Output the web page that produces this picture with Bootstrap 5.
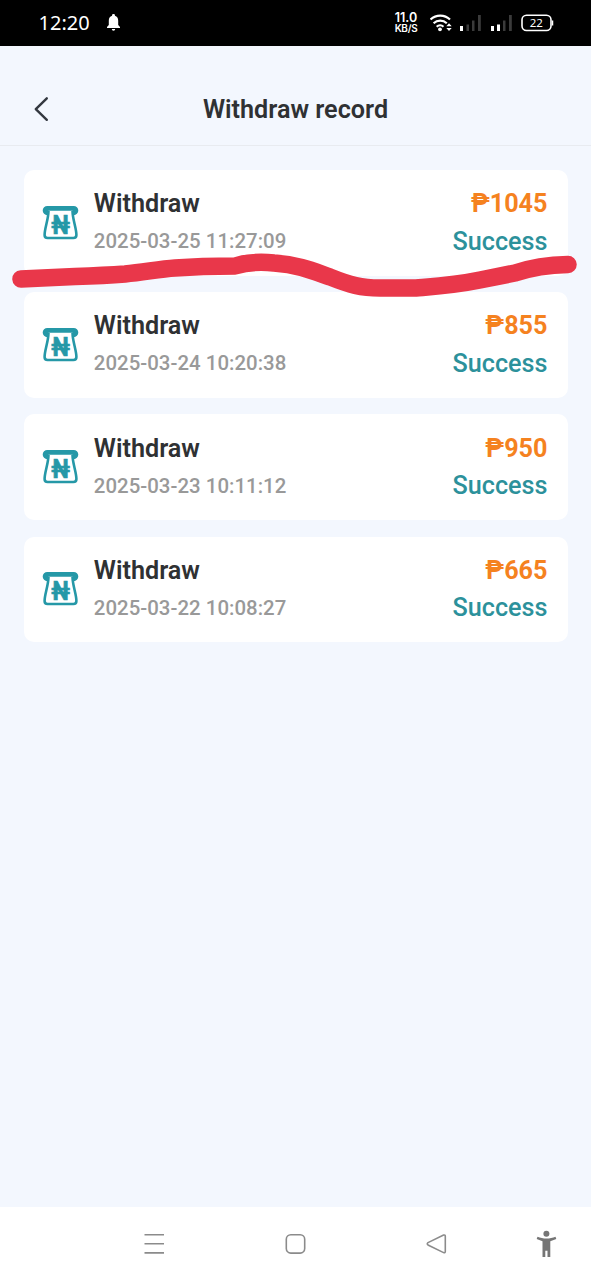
<!DOCTYPE html>
<html lang="en">
<head>
<meta charset="utf-8">
<meta name="viewport" content="width=device-width, initial-scale=1">
<title>Withdraw record</title>
<link rel="stylesheet" href="https://cdn.jsdelivr.net/npm/bootstrap@5.3.0/dist/css/bootstrap.min.css">
<style>
  body { font-family: Roboto, "Noto Sans", sans-serif; background: #f3f7fe; color: #2f3133; height: 1280px; overflow: hidden; }
  svg { display: block; flex: none; }
  .status { height: 46px; background: #000; color: #fff; padding: 0 37px 0 38.5px; }
  .clock { font: 400 20px/46px "Noto Sans", sans-serif; width: 67.5px; height: 46px; }
  .speed { font: 600 12.5px/10.5px Inter, sans-serif; width: 28px; margin-right: 10px; }
  .speed small { font-size: 10px; letter-spacing: -.3px; display: block; }
  .topbar { height: 100px; padding-top: 28px; border-bottom: 1px solid #e8ebf0; }
  .topbar h1 { font-size: 25.2px; line-height: 30px; font-weight: 600; margin: 0; }
  .back { left: 34px; top: 50px; }
  .records { padding: 24px 23.5px 0; gap: 16.4px; }
  .record { height: 105.8px; border: 0; border-radius: 10px; padding: 0 20px 0 18px; }
  .info { margin: -3.4px 0 0 14.3px; }
  .label { font-size: 25.2px; line-height: 30px; font-weight: 600; }
  .date { font-size: 20.4px; line-height: 24px; color: #999; margin-top: 10px; letter-spacing: .03px; font-weight: 500; }
  .amount { font-size: 25.2px; line-height: 30px; font-weight: 700; color: #f5821f; }
  .state { font-size: 25.2px; line-height: 30px; font-weight: 500; color: #2c919b; margin-top: 7.4px; }
  .stroke { left: 0; top: 240px; z-index: 2; }
  .sysnav { height: 73px; background: #fff; }
</style>
</head>
<body class="d-flex flex-column position-relative">
<header class="status d-flex align-items-center">
  <span class="clock">12:20</span>
  <svg width="15" height="18" viewBox="0 0 15 18" fill="#fff"><path d="M7.500 0a1.400 1.400 0 0 1 1.400 1.700c2.300.7 3.300 2.600 3.300 5v4.300l1.800 2V14H1v-1l1.800-2V6.700c0-2.400 1-4.300 3.300-5A1.400 1.400 0 0 1 7.500 0zM5.800 15h3.400a1.700 1.700 0 0 1-3.400 0z"/></svg>
  <div class="speed text-center ms-auto">11.0<small>KB/S</small></div>
  <svg width="124" height="22" viewBox="430 12 124 22" fill="none">
    <g stroke="#fff" stroke-width="2.200"><path d="M430.500 19.500a14 14 0 0 1 19.500 0M433.600 23.200a9.600 9.600 0 0 1 13.200 0M436.700 26.700a5 5 0 0 1 6.800 0"/></g>
    <circle cx="440" cy="29.300" r="1.900" fill="#fff"/>
    <path d="M446.300 26.300l2.700-3 2.700 3zM446.300 28l2.700 3 2.700-3z" fill="#fff"/>
    <g fill="#fff"><rect x="460" y="26" width="3" height="5"/><rect x="491" y="26" width="3" height="5"/><rect x="497" y="24.500" width="3" height="6.500"/></g>
    <g fill="#3b3b3b"><rect x="466.500" y="24.500" width="2.500" height="6.500"/><rect x="472" y="20.500" width="2.500" height="10.500"/><rect x="478" y="15" width="2.800" height="16"/><rect x="503" y="20.500" width="2.500" height="10.500"/><rect x="509" y="15" width="2.800" height="16"/></g>
    <rect x="522" y="15.300" width="29" height="15.200" rx="4.500" stroke="#fff" stroke-width="1.600"/>
    <path d="M552.500 20.500v5" stroke="#fff" stroke-width="1.500"/>
    <text x="536.300" y="27" fill="#fff" font-family="Noto Sans" font-size="11.500" text-anchor="middle">22</text>
  </svg>
</header>
<div class="topbar position-relative d-flex flex-column justify-content-center text-center">
  <svg class="back position-absolute" width="15" height="26" viewBox="0 0 15 26" fill="none"><path d="M12.800 2.300L1.800 13.200 12.800 23.800" stroke="#333840" stroke-width="2.400" stroke-linecap="round" stroke-linejoin="round"/></svg>
  <h1>Withdraw record</h1>
</div>
<main class="records d-flex flex-column flex-grow-1" id="records"></main>
<svg class="stroke position-absolute" width="591" height="64" viewBox="0 240 591 64" fill="none"><path d="M21 279L75 276.500Q105 275.500 125 274C145 272 160 269 175 268L203 266.500L235 266C248 262 260 261.500 274 263C300 265 313 271 330 277C350 285 361 288 380 288H416C440 286 456 285 480 280L515 273C530 268 545 265 568 264.500" stroke="#e9374a" stroke-width="17.500" stroke-linecap="round" stroke-linejoin="round"/></svg>
<footer class="sysnav">
  <svg width="591" height="73" viewBox="0 1207 591 73" fill="none" stroke="#8b8b8b" stroke-width="1.600">
    <path d="M144.500 1234.800h19.500M144.500 1243.800h19.500M144.500 1252.900h19.500"/>
    <rect x="286.300" y="1234.700" width="18.400" height="18.400" rx="4.500"/>
    <path d="M428 1242.600L443.600 1235.100Q445.300 1234.600 445.300 1236.400V1251.400Q445.300 1253.200 443.600 1252.600L428 1245Q426.500 1243.800 428 1242.600z"/>
    <g fill="#757575" stroke="none"><circle cx="546.400" cy="1233.700" r="3"/><path d="M537.500 1236.700C543 1239.100 550 1239.100 555.500 1236.700L556.300 1238.900L550.300 1241.300V1257H547.500V1250.700H545.300V1257H542.500V1241.300L536.700 1238.900z"/></g>
  </svg>
</footer>
<template id="row">
  <article class="record card flex-row align-items-center">
    <svg width="38" height="36" viewBox="0 0 38 36" fill="none">
      <path d="M6.500 6C6.300 15 2.600 23 2.600 30Q2.600 33 5.600 33H31.400Q34.400 33 34.400 30C34.400 23 30.700 15 30.500 6" stroke="#2598a7" stroke-width="2.600"/>
      <path d="M5.300 1H31.700A4.600 4.600 0 0 1 31.700 10.200L30.500 9.500V5.800H6.500V9.500L5.300 10.200A4.600 4.600 0 0 1 5.300 1z" fill="#2598a7"/>
      <text transform="translate(18.500 28.500) scale(.96 1.060)" fill="#2598a7" stroke="#2598a7" stroke-width=".6" font-family="Roboto" font-weight="700" font-size="24" text-anchor="middle">₦</text>
    </svg>
    <div class="info flex-grow-1">
      <div class="label">Withdraw</div>
      <div class="date"></div>
    </div>
    <div class="text-end">
      <div class="amount"></div>
      <div class="state">Success</div>
    </div>
  </article>
</template>
<script src="https://cdn.jsdelivr.net/npm/bootstrap@5.3.0/dist/js/bootstrap.bundle.min.js"></script>
<script>
  const data = [["2025-03-25 11:27:09", "₱1045"], ["2025-03-24 10:20:38", "₱855"], ["2025-03-23 10:11:12", "₱950"], ["2025-03-22 10:08:27", "₱665"]];
  for (const [date, amount] of data) {
    const n = document.getElementById("row").content.cloneNode(true);
    n.querySelector(".date").textContent = date;
    n.querySelector(".amount").textContent = amount;
    document.getElementById("records").append(n);
  }
</script>
</body>
</html>
